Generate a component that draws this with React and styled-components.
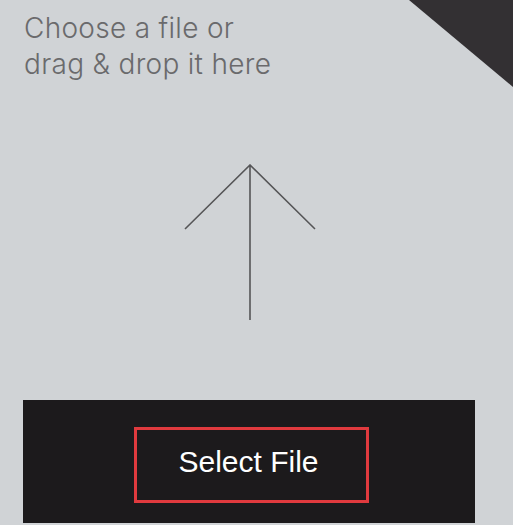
import React from "react";
import styled, { createGlobalStyle } from "styled-components";

const GlobalStyle = createGlobalStyle`
  html, body {
    margin: 0;
    padding: 0;
    background: #d0d3d6;
  }
  body {
    font-family: "Liberation Sans", Arial, sans-serif;
  }
`;

const Page = styled.div`
  position: relative;
  width: 513px;
  height: 525px;
  overflow: hidden;
  background: #d0d3d6;
`;

const Corner = styled.div`
  position: absolute;
  top: 0;
  right: 0;
  width: 104px;
  height: 87px;
  background: #333033;
  clip-path: polygon(0 0, 100% 0, 100% 100%);
`;

const Column = styled.div`
  width: 452px;
  margin-left: 23px;
  padding-top: 10px;
  display: flex;
  flex-direction: column;
`;

const Title = styled.div`
  font-family: Inter, "Liberation Sans", sans-serif;
  font-weight: 300;
  font-size: 28px;
  letter-spacing: 0.3px;
  line-height: 36px;
  color: #6a6a6c;
  padding-left: 1px;
`;

const ArrowWrap = styled.div`
  display: flex;
  justify-content: center;
  margin-top: 82px;
  margin-bottom: 78px;
  padding-left: 1px;
`;

const Panel = styled.div`
  height: 123px;
  box-sizing: border-box;
  background: #1c1a1c;
  padding: 27px 0 0 111px;
`;

const SelectButton = styled.button`
  width: 235px;
  height: 76px;
  box-sizing: border-box;
  border: 3px solid #e03a3e;
  background: transparent;
  color: #ffffff;
  font-family: "Liberation Sans", Arial, sans-serif;
  font-size: 30px;
  padding: 0 6px 6px 0;
  cursor: pointer;
`;

const UploadArrow = () => (
  <svg width="132" height="158" viewBox="0 0 132 158" fill="none">
    <path
      d="M1 65 L66 1 L131 65 M66 1 L66 156"
      stroke="#555557"
      strokeWidth="1.6"
    />
  </svg>
);

export default function App() {
  return (
    <Page>
      <GlobalStyle />
      <Corner />
      <Column>
        <Title>
          Choose a file or
          <br />
          drag &amp; drop it here
        </Title>
        <ArrowWrap>
          <UploadArrow />
        </ArrowWrap>
        <Panel>
          <SelectButton>Select File</SelectButton>
        </Panel>
      </Column>
    </Page>
  );
}
